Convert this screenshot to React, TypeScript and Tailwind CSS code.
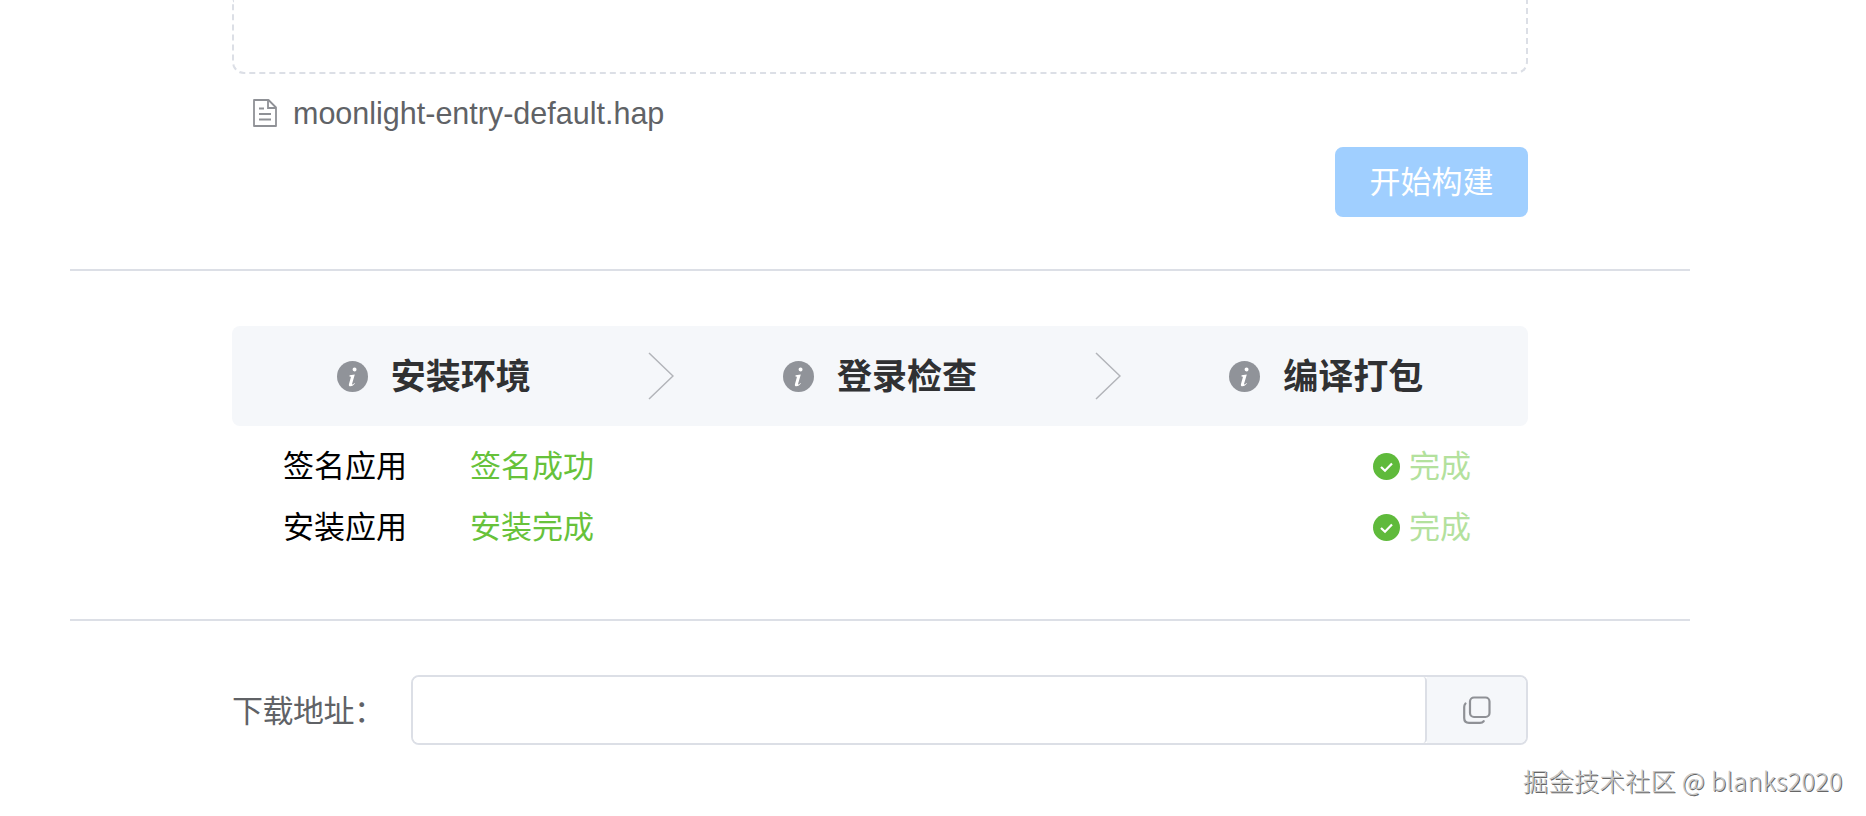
const cjk = "font-['Liberation_Sans','Noto_Sans_CJK_SC',sans-serif]";

function InfoIcon() {
  return (
    <svg width="31" height="31" viewBox="0 0 31 31" className="shrink-0">
      <circle cx="15.5" cy="15.5" r="15.5" fill="#909399" />
      <path d="M17.6 6.4a2 2 0 1 1-.1 4 2 2 0 0 1 .1-4zM12.6 14.2l5.2-.8-2.7 9.4c-.2.8.5.9 1.1.4l1.3-1.1.4.5c-1.2 1.5-2.6 2.700-4.400 2.700-1.500 0-1.900-1-1.500-2.400l1.800-6.500c.2-.8-.2-1-1.400-1z" fill="#fff" />
    </svg>
  );
}

function CheckIcon() {
  return (
    <svg width="27" height="27" viewBox="0 0 27 27" className="shrink-0">
      <circle cx="13.5" cy="13.5" r="13.500" fill="#5fba3b" />
      <path d="M8 14l4 3.800 7-7.300" fill="none" stroke="#fff" strokeWidth="2.200" />
    </svg>
  );
}

function FileIcon() {
  return (
    <svg width="24" height="28" viewBox="0 0 24 28" className="shrink-0" fill="none" stroke="#8f9196" strokeWidth="1.800">
      <path d="M1 1h14.500L23 8.500V27H1z" strokeLinejoin="round" />
      <path d="M15 1v8h8M6 9.500h5M6 15h12M6 20.500h12" />
    </svg>
  );
}

function CopyIcon() {
  return (
    <svg width="28" height="28" viewBox="0 0 28 28" fill="none" stroke="#8f9196" strokeWidth="2.200" className="shrink-0">
      <rect x="7" y="1.500" width="19.500" height="19.500" rx="4" />
      <path d="M2.500 7.500c-1 1-1.300 2-1.300 3.500v11c0 3 1.800 4.800 4.800 4.800h11c1.600 0 2.800-.5 3.700-1.600" strokeLinecap="round" />
    </svg>
  );
}

function Chevron() {
  return (
    <div className="w-[43px] pl-[13px] shrink-0 flex items-center">
      <svg width="26" height="48" viewBox="0 0 26 48" fill="none" stroke="#b2b4b9" strokeWidth="1.500">
        <path d="M1 1l24 23L1 47" />
      </svg>
    </div>
  );
}

function Step({ title }: { title: string }) {
  return (
    <div className="flex-1 flex items-center justify-center gap-[23px]">
      <InfoIcon />
      <span className="text-[35px] font-bold text-[#303133] leading-none whitespace-nowrap">{title}</span>
    </div>
  );
}

function Row({ label, value }: { label: string; value: string }) {
  return (
    <div className="h-[61px] flex items-center pl-[51px] pr-[57px] text-[31px]">
      <span className="w-[187px] pt-[2px] text-black whitespace-nowrap">{label}</span>
      <span className="pt-[2px] text-[#67c23a] whitespace-nowrap">{value}</span>
      <span className="ml-auto flex items-center gap-[9px]">
        <CheckIcon />
        <span className="pt-[2px] text-[#b3e19d] whitespace-nowrap">完成</span>
      </span>
    </div>
  );
}

export default function App() {
  return (
    <div className={`relative h-[816px] w-[1866px] overflow-hidden bg-white ${cjk}`}>
      <div className="ml-[70px] w-[1620px]">
        <div className="px-[162px] h-[269px]">
          <div className="h-[74px] border-2 border-t-0 border-dashed border-[#dcdfe6] rounded-b-[12px]" />
          <div className="mt-[13px] h-[52px] pl-[21px] flex items-center gap-[16px] text-[#606266] text-[30.500px]">
            <FileIcon />
            <span className="pt-[2px] whitespace-nowrap">moonlight-entry-default.hap</span>
          </div>
          <div className="mt-[8px] flex justify-end">
            <button className="w-[193px] h-[70px] pt-[2px] rounded-[8px] bg-[#a0cfff] text-white text-[31px]">开始构建</button>
          </div>
        </div>
        <div className="h-[2px] bg-[#dcdfe6]" />
        <div className="px-[162px] h-[348px] pt-[55px]">
          <div className="h-[100px] bg-[#f5f7fa] rounded-[8px] flex items-center">
            <Step title="安装环境" />
            <Chevron />
            <Step title="登录检查" />
            <Chevron />
            <Step title="编译打包" />
          </div>
          <div className="mt-[10px]">
            <Row label="签名应用" value="签名成功" />
            <Row label="安装应用" value="安装完成" />
          </div>
        </div>
        <div className="h-[2px] bg-[#dcdfe6]" />
        <div className="px-[162px] pt-[54px] flex items-center">
          <span className="w-[179px] pt-[4px] text-[#606266] text-[31px] tracking-[-0.5px] whitespace-nowrap">下载地址：</span>
          <div className="flex-1 h-[70px] flex border-2 border-[#dcdfe6] rounded-[8px] overflow-hidden">
            <div className="flex-1 bg-white border-r-2 border-[#dcdfe6] rounded-r-[4px]" />
            <div className="w-[99px] bg-[#f5f7fa] flex items-center justify-center">
              <CopyIcon />
            </div>
          </div>
        </div>
      </div>
      <div className="absolute left-[1523px] top-[762px] text-[25.200px] leading-[36px] tracking-[0.3px] font-light whitespace-nowrap text-[#c4c4c4] font-['Noto_Sans_CJK_SC',sans-serif] [text-shadow:1px_1px_0_#666]">
        掘金技术社区 @ blanks2020
      </div>
    </div>
  );
}
